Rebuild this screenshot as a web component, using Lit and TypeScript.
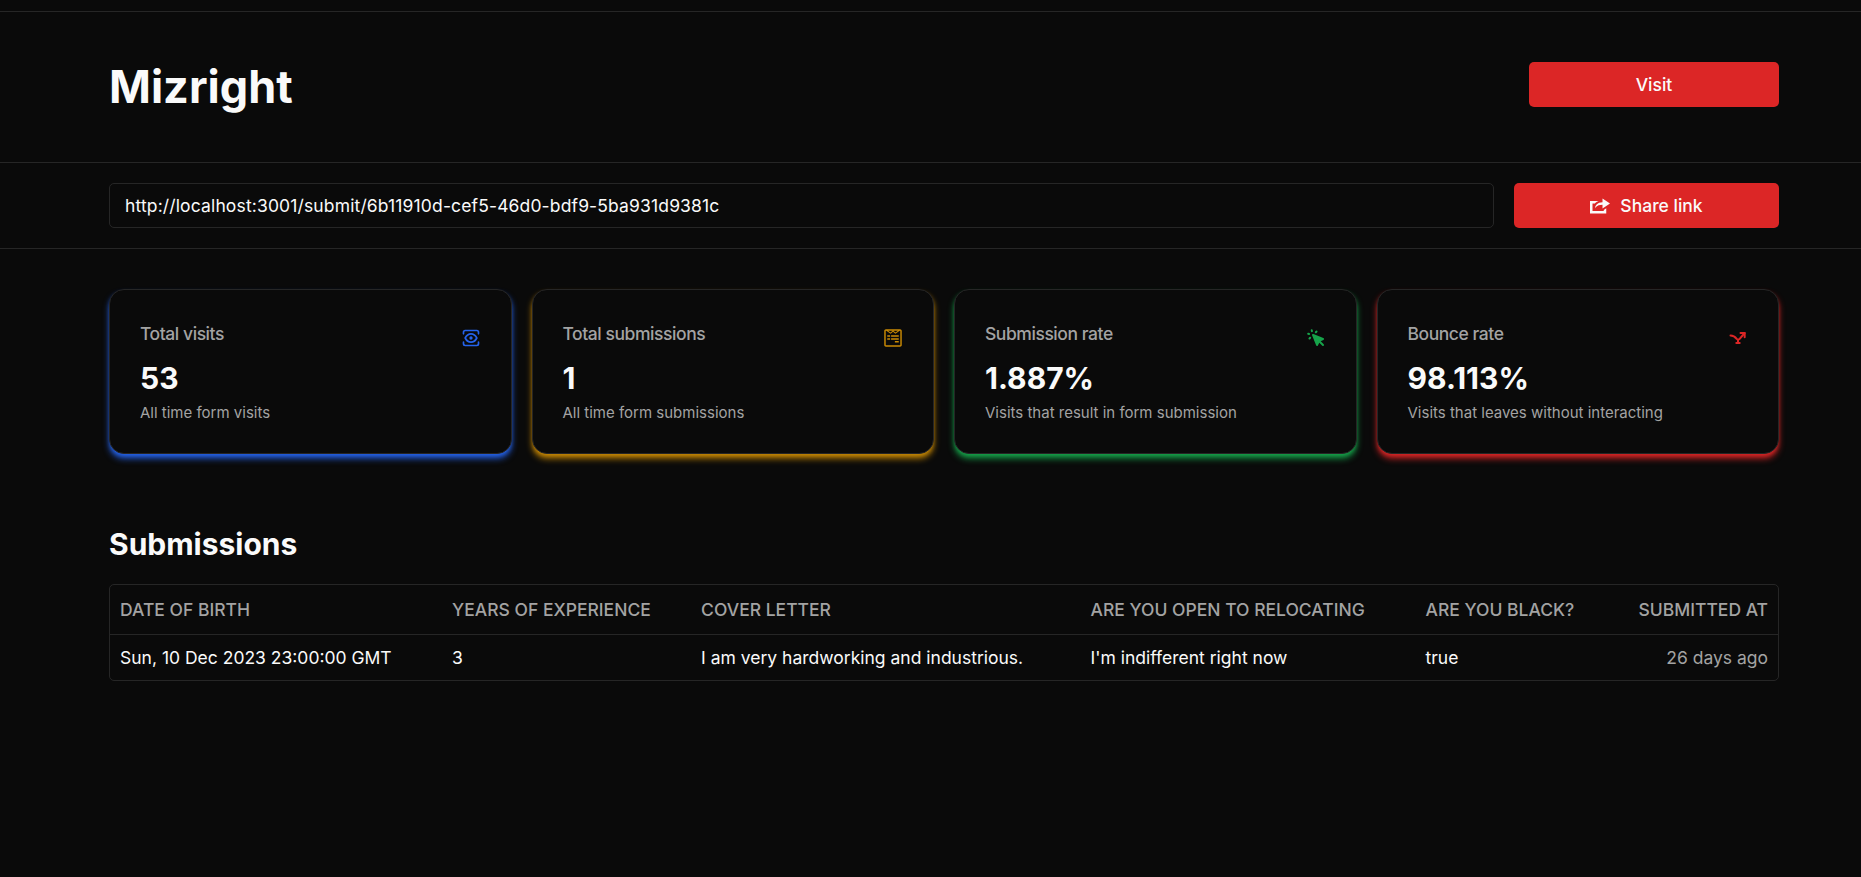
import { LitElement, html, css, svg } from "lit";
import { customElement } from "lit/decorators.js";

const viewIcon = html`<svg class="icon blue" viewBox="0 0 24 24" fill="none" stroke="currentColor" stroke-width="2" stroke-linecap="round" stroke-linejoin="round">
  <path d="M5 12s2.545-5 7-5c4.454 0 7 5 7 5s-2.546 5-7 5c-4.455 0-7-5-7-5z"></path>
  <path d="M12 13a1 1 0 1 0 0-2 1 1 0 0 0 0 2z"></path>
  <path d="M21 17v2a2 2 0 0 1-2 2H5a2 2 0 0 1-2-2v-2"></path>
  <path d="M21 7V5a2 2 0 0 0-2-2H5a2 2 0 0 0-2 2v2"></path>
</svg>`;

const formIcon = html`<svg class="icon yellow" viewBox="0 0 448 512" fill="currentColor">
  <path d="M448 75.2v361.7c0 24.3-19 43.2-43.2 43.2H43.2C19.3 480 0 461.4 0 436.8V75.2C0 51.1 18.8 32 43.2 32h361.7c24 0 43.1 18.8 43.1 43.2zm-37.3 361.6V75.2c0-3-2.6-5.8-5.8-5.8h-9.3L285.3 144 224 94.1 162.8 144 52.5 69.3h-9.3c-3.2 0-5.8 2.8-5.8 5.8v361.7c0 3 2.6 5.8 5.8 5.8h361.7c3.2.1 5.8-2.7 5.8-5.8zM150.2 186v37H76.7v-37h73.5zm0 74.4v37.3H76.7v-37.3h73.5zm11.1-147.3l54-43.7H96.8l64.5 43.7zm210 72.9v37h-196v-37h196zm0 74.4v37.3h-196v-37.3h196zm-84.6-147.3l64.5-43.7H232.8l53.9 43.7zM371.3 335v37.3h-99.4V335h99.4z"></path>
</svg>`;

const clickIcon = html`<svg class="icon green" viewBox="0 0 20 20" fill="currentColor">
  <path fill-rule="evenodd" clip-rule="evenodd" d="M6.672 1.911a1 1 0 10-1.932.518l.259.966a1 1 0 001.932-.518l-.26-.966zM2.429 4.74a1 1 0 10-.517 1.932l.966.259a1 1 0 00.517-1.932l-.966-.26zm8.814-.569a1 1 0 00-1.415-1.414l-.707.707a1 1 0 101.415 1.415l.707-.708zm-7.071 7.072l.707-.707A1 1 0 003.465 9.12l-.708.707a1 1 0 001.415 1.415zm3.2-5.171a1 1 0 00-1.3 1.3l4 10a1 1 0 001.823.075l1.38-2.759 3.018 3.02a1 1 0 001.414-1.415l-3.019-3.02 2.76-1.379a1 1 0 00-.076-1.822l-10-4z"></path>
</svg>`;

const bounceIcon = html`<svg class="icon red" viewBox="0 0 24 24" fill="none" stroke="currentColor" stroke-width="2.4" stroke-linecap="round" stroke-linejoin="round">
  <path d="M15 6h5v5"></path>
  <path d="M20 6l-6 7a2.5 2.5 0 0 1-3.6 0C8.5 10.5 6.5 9 3 9"></path>
  <path d="M12 14v4"></path>
  <path d="M10 18h4"></path>
</svg>`;

const shareIcon = svg`<svg class="share" viewBox="0 0 16 16" fill="currentColor">
  <path d="M4 10c0 0 0.919-3 6-3v3l6-4-6-4v3c-4 0-6 2.495-6 5zM11 12h-9v-6h1.967c0.158-0.186 0.327-0.365 0.508-0.534 0.687-0.644 1.509-1.135 2.439-1.466h-6.914v10h13v-4.197l-2 1.333v0.864z"></path>
</svg>`;

const stats = [
  { title: "Total visits", value: "53", note: "All time form visits", tone: "blue", icon: viewIcon },
  { title: "Total submissions", value: "1", note: "All time form submissions", tone: "yellow", icon: formIcon },
  { title: "Submission rate", value: "1.887%", note: "Visits that result in form submission", tone: "green", icon: clickIcon },
  { title: "Bounce rate", value: "98.113%", note: "Visits that leaves without interacting", tone: "red", icon: bounceIcon },
];

const columns = [
  "Date of birth",
  "Years of experience",
  "Cover letter",
  "Are you open to relocating",
  "Are you black?",
];

const row = [
  "Sun, 10 Dec 2023 23:00:00 GMT",
  "3",
  "I am very hardworking and industrious.",
  "I'm indifferent right now",
  "true",
];

@customElement("app-root")
export class AppRoot extends LitElement {
  static styles = css`
    :host {
      display: block;
      min-height: 877px;
      background: #0a0a0a;
      color: #fafafa;
      font-family: Inter, "Liberation Sans", sans-serif;
      font-size: 17.5px;
      line-height: 25px;
      --line: #262626;
      --muted: #a3a3a3;
    }

    .top {
      height: 11px;
      border-bottom: 1px solid var(--line);
    }

    .band {
      padding-left: 109px;
      padding-right: 82px;
    }

    .head {
      display: flex;
      justify-content: space-between;
      padding-top: 50px;
      padding-bottom: 50px;
      border-bottom: 1px solid var(--line);
    }

    h1 {
      margin: 0;
      font-size: 45px;
      line-height: 50px;
      font-weight: 700;
    }

    .btn {
      display: flex;
      align-items: center;
      justify-content: center;
      gap: 10px;
      height: 45px;
      border-radius: 5px;
      background: #dc2626;
      color: #fafafa;
      font-weight: 500;
    }

    .visit {
      width: 250px;
    }

    .link {
      display: flex;
      gap: 20px;
      padding-top: 20px;
      padding-bottom: 20px;
      border-bottom: 1px solid var(--line);
    }

    .url {
      flex: 1;
      display: flex;
      align-items: center;
      height: 45px;
      box-sizing: border-box;
      padding: 0 15px;
      border: 1px solid var(--line);
      border-radius: 5px;
      letter-spacing: 0.14px;
    }

    .sharebtn {
      width: 265px;
      flex: none;
    }

    .share {
      width: 20px;
      height: 20px;
    }

    .stats {
      display: grid;
      grid-template-columns: repeat(4, 1fr);
      gap: 20px;
      padding-top: 40px;
    }

    .card {
      box-sizing: border-box;
      height: 165px;
      padding: 30px;
      border: 1px solid var(--line);
      border-radius: 15px;
      background: #0a0a0a;
    }

    .card.blue {
      box-shadow: 0 5px 7.5px -1.25px #2563eb, 0 2.5px 5px -2.5px #2563eb;
    }
    .card.yellow {
      box-shadow: 0 5px 7.5px -1.25px #ca8a04, 0 2.5px 5px -2.5px #ca8a04;
    }
    .card.green {
      box-shadow: 0 5px 7.5px -1.25px #16a34a, 0 2.5px 5px -2.5px #16a34a;
    }
    .card.red {
      box-shadow: 0 5px 7.5px -1.25px #dc2626, 0 2.5px 5px -2.5px #dc2626;
    }

    .card-head {
      display: flex;
      justify-content: space-between;
      align-items: center;
      height: 36px;
      margin-bottom: 2px;
    }

    .card-title {
      align-self: flex-start;
      margin-top: 1px;
      color: var(--muted);
      font-weight: 500;
      letter-spacing: -0.44px;
    }

    .icon {
      width: 20px;
      height: 20px;
    }
    .icon.blue {
      color: #2563eb;
    }
    .icon.yellow {
      color: #ca8a04;
    }
    .icon.green {
      color: #16a34a;
    }
    .icon.red {
      color: #dc2626;
    }

    .value {
      font-size: 30px;
      line-height: 40px;
      font-weight: 700;
    }

    .note {
      margin-top: 5px;
      color: var(--muted);
      font-size: 15px;
      line-height: 20px;
    }

    h2 {
      margin: 70px 0 20px;
      font-size: 30px;
      line-height: 40px;
      font-weight: 700;
    }

    .table {
      border: 1px solid var(--line);
      border-radius: 5px;
    }

    table {
      width: 100%;
      border-collapse: collapse;
    }

    th {
      height: 49px;
      padding: 0 10px;
      border-bottom: 1px solid var(--line);
      color: var(--muted);
      font-weight: 500;
      text-align: left;
      text-transform: uppercase;
    }

    td {
      padding: 10px;
    }

    .end {
      text-align: right;
      white-space: nowrap;
    }

    td.end {
      color: var(--muted);
    }
  `;

  render() {
    return html`
      <div class="top"></div>
      <div class="band head">
        <h1>Mizright</h1>
        <div class="btn visit">Visit</div>
      </div>
      <div class="band link">
        <div class="url">http://localhost:3001/submit/6b11910d-cef5-46d0-bdf9-5ba931d9381c</div>
        <div class="btn sharebtn">${shareIcon}<span>Share link</span></div>
      </div>
      <div class="band">
        <div class="stats">
          ${stats.map(
            (s) => html`
              <div class="card ${s.tone}">
                <div class="card-head">
                  <div class="card-title">${s.title}</div>
                  ${s.icon}
                </div>
                <div class="value">${s.value}</div>
                <div class="note">${s.note}</div>
              </div>
            `
          )}
        </div>
        <h2>Submissions</h2>
        <div class="table">
          <table>
            <thead>
              <tr>
                ${columns.map((c) => html`<th>${c}</th>`)}
                <th class="end">Submitted at</th>
              </tr>
            </thead>
            <tbody>
              <tr>
                ${row.map((c) => html`<td>${c}</td>`)}
                <td class="end">26 days ago</td>
              </tr>
            </tbody>
          </table>
        </div>
      </div>
    `;
  }
}
